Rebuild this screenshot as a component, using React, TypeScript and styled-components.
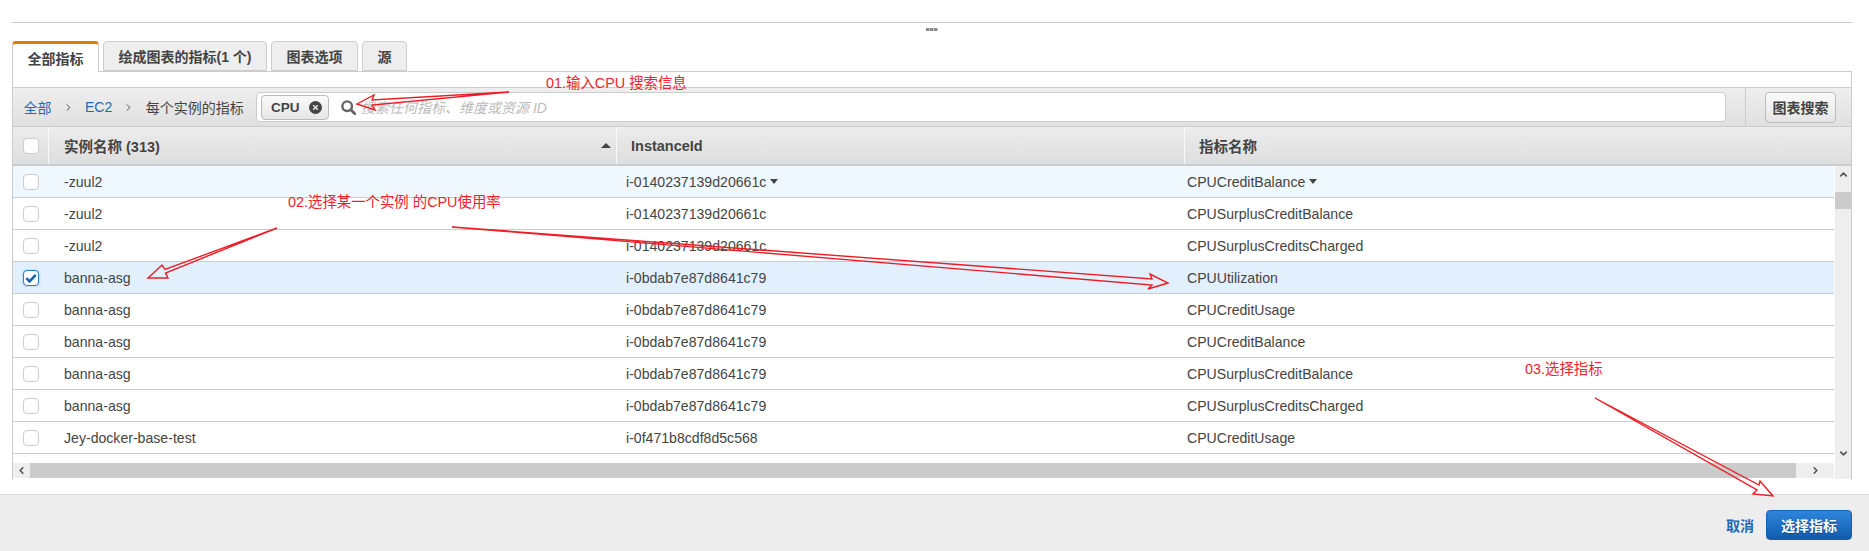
import { createGlobalStyle } from "styled-components";
import styled from "styled-components";
import { ChevronDown, ChevronLeft, ChevronRight, ChevronUp } from "lucide-react";

const FONT = `"Liberation Sans", "Noto Sans CJK SC", sans-serif`;

const GlobalStyle = createGlobalStyle`
  html, body {
    margin: 0;
    padding: 0;
    background: #fff;
    overflow: hidden;
  }
  body {
    font-family: ${FONT};
    color: #444;
  }
`;

const Page = styled.div`
  position: relative;
  width: 1869px;
  height: 551px;
  display: flex;
  flex-direction: column;
`;

const Splitter = styled.div`
  height: 41px;
  padding: 22px 17px 0 12px;
  box-sizing: border-box;
`;

const SplitLine = styled.div`
  height: 1px;
  background: #ccc;
`;

const SplitHandle = styled.div`
  width: 12px;
  height: 3px;
  margin: 5px auto 0;
  background: repeating-linear-gradient(90deg, #8a8a8a 0 3px, #c9c9c9 3px 4px);
`;

const TabBar = styled.div`
  display: flex;
  gap: 4px;
  height: 30px;
  margin: 0 17px 0 12px;
  position: relative;
  z-index: 1;
`;

const Tab = styled.div<{ $active?: boolean }>`
  box-sizing: border-box;
  padding: 0 14.5px;
  height: ${(p) => (p.$active ? "31px" : "30px")};
  display: flex;
  align-items: center;
  font-size: 14px;
  font-weight: 700;
  color: #444;
  background: ${(p) => (p.$active ? "#fff" : "#eee")};
  border: 1px solid #ccc;
  border-top: ${(p) => (p.$active ? "3px solid #e07b00" : "1px solid #ccc")};
  border-bottom: ${(p) => (p.$active ? "none" : "1px solid #ccc")};
  border-radius: 4px 4px 0 0;
`;

const Panel = styled.div`
  margin: 0 17px 0 12px;
  height: 409px;
  box-sizing: border-box;
  border: 1px solid #ccc;
  border-bottom: none;
  display: flex;
  flex-direction: column;
`;

const TabStrip = styled.div`
  height: 15px;
  flex: none;
  border-bottom: 1px solid #ccc;
`;

const Toolbar = styled.div`
  height: 38px;
  flex: none;
  display: flex;
  align-items: center;
  padding: 0 15px 0 10.5px;
  background: linear-gradient(#eee, #e0e0e0);
  border-bottom: 1px solid #ccc;
`;

const Crumbs = styled.div`
  display: flex;
  align-items: center;
  width: 232.5px;
  flex: none;
  font-size: 14px;
  color: #444;
`;

const CrumbLink = styled.a`
  color: #1f69b5;
`;

const CrumbSeparator = styled(ChevronRight)`
  width: 11px;
  height: 11px;
  margin: 0 11.5px 0 11px;
  color: #444;
`;

const SearchBox = styled.div`
  flex: 1;
  height: 30px;
  box-sizing: border-box;
  display: flex;
  align-items: center;
  padding-left: 4px;
  background: #fff;
  border: 1px solid #ccc;
  border-radius: 4px;
`;

const Chip = styled.div`
  width: 68px;
  height: 25px;
  box-sizing: border-box;
  display: flex;
  align-items: center;
  padding-left: 9px;
  gap: 9px;
  font-size: 13.5px;
  font-weight: 700;
  color: #444;
  background: linear-gradient(#fafafa, #e6e6e6);
  border: 1px solid #bbb;
  border-radius: 4px;
`;

const ChipClose = styled.svg`
  width: 13px;
  height: 13px;
`;

const SearchIcon = styled.svg`
  width: 15px;
  height: 15px;
  margin: 0 5px 0 12px;
  flex: none;
`;

const Placeholder = styled.span`
  font-size: 14px;
  font-style: italic;
  color: #bbb;
`;

const ToolDivider = styled.div`
  align-self: stretch;
  width: 1px;
  margin: 0 19px;
  background: #ccc;
`;

const GhostButton = styled.div`
  width: 71px;
  height: 31px;
  box-sizing: border-box;
  display: flex;
  align-items: center;
  justify-content: center;
  font-size: 14px;
  font-weight: 700;
  color: #444;
  background: linear-gradient(#fafafa, #e4e4e4);
  border: 1px solid #bbb;
  border-radius: 4px;
`;

const HeaderRow = styled.div`
  height: 39px;
  flex: none;
  box-sizing: border-box;
  display: grid;
  grid-template-columns: 35px 568px 568px 1fr;
  background: linear-gradient(#ececec, #dedede);
  border-bottom: 2px solid #ccc;
`;

const HeaderCell = styled.div<{ $pad?: number }>`
  display: flex;
  align-items: center;
  padding-left: ${(p) => p.$pad ?? 15}px;
  font-size: 14.5px;
  font-weight: 700;
  color: #444;
  border-left: 1px solid #f8f8f8;
  box-sizing: border-box;
`;

const CheckCell = styled.div`
  display: flex;
  align-items: center;
  justify-content: center;
`;

const SortCell = styled(HeaderCell)`
  justify-content: space-between;
  padding-right: 5px;
`;

const SortArrow = styled.span`
  width: 0;
  height: 0;
  border-left: 5px solid transparent;
  border-right: 5px solid transparent;
  border-bottom: 5px solid #444;
`;

const Checkbox = styled.div<{ $checked?: boolean }>`
  width: 16px;
  height: 16px;
  box-sizing: border-box;
  display: flex;
  align-items: center;
  justify-content: center;
  background: #fff;
  border-radius: 4px;
  border: 1px solid ${(p) => (p.$checked ? "#2b7bd0" : "#ccc")};
  box-shadow: ${(p) => (p.$checked ? "0 0 2px #7fb4ea" : "none")};
`;

const CheckMark = styled.svg`
  width: 12px;
  height: 10px;
`;

const Body = styled.div`
  flex: 1;
  display: grid;
  grid-template-columns: 1fr 17px;
  min-height: 0;
`;

const TableArea = styled.div`
  display: flex;
  flex-direction: column;
  min-width: 0;
`;

const Rows = styled.div`
  height: 297px;
  flex: none;
`;

const Row = styled.div<{ $tone?: "hover" | "selected" }>`
  height: 32px;
  box-sizing: border-box;
  display: grid;
  grid-template-columns: 35px 568px 568px 1fr;
  align-items: center;
  font-size: 14.1px;
  color: #444;
  border-bottom: 1px solid #ccc;
  background: ${(p) =>
    p.$tone === "hover" ? "#f0f8ff" : p.$tone === "selected" ? "#e2f0fd" : "#fff"};
`;

const Cell = styled.div<{ $pad: number }>`
  display: flex;
  align-items: center;
  gap: 4px;
  padding-left: ${(p) => p.$pad}px;
`;

const DropArrow = styled.span`
  width: 0;
  height: 0;
  border-left: 4.5px solid transparent;
  border-right: 4.5px solid transparent;
  border-top: 5px solid #444;
`;

const HScroll = styled.div`
  height: 15px;
  flex: none;
  display: flex;
  background: #eee;
`;

const ScrollButton = styled.div<{ $w: number }>`
  width: ${(p) => p.$w}px;
  flex: none;
  display: flex;
  align-items: center;
  justify-content: center;
  color: #555;
`;

const HThumb = styled.div`
  flex: 1;
  background: #cbcbcb;
`;

const VScroll = styled.div`
  display: flex;
  flex-direction: column;
  align-items: stretch;
  background: #eee;
  border-left: 1px solid #fff;
  height: 313px;
`;

const VThumb = styled.div`
  height: 17px;
  margin: 9px 0 0;
  background: #cbcbcb;
`;

const VSpacer = styled.div`
  flex: 1;
`;

const ArrowBox = styled.div<{ $end?: boolean }>`
  height: 17px;
  margin-bottom: ${(p) => (p.$end ? "17px" : "0")};
  display: flex;
  align-items: center;
  justify-content: center;
  color: #555;
`;

const Footer = styled.div`
  margin-top: 14px;
  flex: 1;
  display: flex;
  align-items: center;
  justify-content: flex-end;
  gap: 12px;
  padding: 4px 17px 0 0;
  background: #ededed;
  border-top: 1px solid #ddd;
`;

const CancelLink = styled.a`
  font-size: 14px;
  font-weight: 700;
  color: #2268b2;
`;

const PrimaryButton = styled.div`
  width: 86px;
  height: 30px;
  box-sizing: border-box;
  display: flex;
  align-items: center;
  justify-content: center;
  font-size: 14px;
  font-weight: 700;
  color: #fff;
  text-shadow: 0 1px 1px #0b4a8f;
  background: linear-gradient(#2f86dc, #0f5cae);
  border: 1px solid #1560ad;
  border-radius: 4px;
`;

// red notes drawn over the page, their place on the picture is the content
const Note = styled.div<{ $x: number; $y: number }>`
  position: absolute;
  left: ${(p) => p.$x}px;
  top: ${(p) => p.$y}px;
  font-size: 14.4px;
  line-height: 18px;
  color: #f0222e;
  white-space: nowrap;
`;

const ArrowLayer = styled.svg`
  position: absolute;
  left: 0;
  top: 0;
  width: 1869px;
  height: 551px;
  z-index: 2;
  pointer-events: none;
`;

const ARROWS = [
  "509,92 372,100 374,95 357,104 375,110 372,105",
  "277,228 165,269.5 162,265 148,278 168,278 165.5,273",
  "452,227 1152,279 1150,274 1168,283 1148,289 1152,285",
  "1595,398 1759,485 1760,481 1773,496 1753,494 1757,490",
];

const ROWS = [
  { name: "-zuul2", id: "i-0140237139d20661c", metric: "CPUCreditBalance", tone: "hover" as const, menu: true },
  { name: "-zuul2", id: "i-0140237139d20661c", metric: "CPUSurplusCreditBalance" },
  { name: "-zuul2", id: "i-0140237139d20661c", metric: "CPUSurplusCreditsCharged" },
  { name: "banna-asg", id: "i-0bdab7e87d8641c79", metric: "CPUUtilization", tone: "selected" as const, checked: true },
  { name: "banna-asg", id: "i-0bdab7e87d8641c79", metric: "CPUCreditUsage" },
  { name: "banna-asg", id: "i-0bdab7e87d8641c79", metric: "CPUCreditBalance" },
  { name: "banna-asg", id: "i-0bdab7e87d8641c79", metric: "CPUSurplusCreditBalance" },
  { name: "banna-asg", id: "i-0bdab7e87d8641c79", metric: "CPUSurplusCreditsCharged" },
  { name: "Jey-docker-base-test", id: "i-0f471b8cdf8d5c568", metric: "CPUCreditUsage" },
];

export default function App() {
  return (
    <Page>
      <GlobalStyle />
      <Splitter>
        <SplitLine />
        <SplitHandle />
      </Splitter>
      <TabBar>
        <Tab $active>全部指标</Tab>
        <Tab>绘成图表的指标(1 个)</Tab>
        <Tab>图表选项</Tab>
        <Tab>源</Tab>
      </TabBar>
      <Panel>
        <TabStrip />
        <Toolbar>
          <Crumbs>
            <CrumbLink>全部</CrumbLink>
            <CrumbSeparator strokeWidth={2} />
            <CrumbLink>EC2</CrumbLink>
            <CrumbSeparator strokeWidth={2} />
            <span>每个实例的指标</span>
          </Crumbs>
          <SearchBox>
            <Chip>
              CPU
              <ChipClose viewBox="0 0 13 13">
                <circle cx="6.5" cy="6.5" r="6.5" fill="#444" />
                <path d="M4.2 4.2l4.6 4.6M8.8 4.2l-4.6 4.6" stroke="#ddd" strokeWidth="1.6" />
              </ChipClose>
            </Chip>
            <SearchIcon viewBox="0 0 15 15">
              <circle cx="6.2" cy="6.2" r="4.8" fill="none" stroke="#666" strokeWidth="2.4" />
              <path d="M9.8 9.8l4 4" stroke="#666" strokeWidth="2.8" strokeLinecap="round" />
            </SearchIcon>
            <Placeholder>搜索任何指标、维度或资源 ID</Placeholder>
          </SearchBox>
          <ToolDivider />
          <GhostButton>图表搜索</GhostButton>
        </Toolbar>
        <HeaderRow>
          <CheckCell>
            <Checkbox />
          </CheckCell>
          <SortCell>
            实例名称 (313)
            <SortArrow />
          </SortCell>
          <HeaderCell $pad={14}>InstanceId</HeaderCell>
          <HeaderCell $pad={14}>指标名称</HeaderCell>
        </HeaderRow>
        <Body>
          <TableArea>
            <Rows>
              {ROWS.map((row, index) => (
                <Row key={index} $tone={row.tone}>
                  <CheckCell>
                    <Checkbox $checked={row.checked}>
                      {row.checked && (
                        <CheckMark viewBox="0 0 11 9">
                          <path d="M1.2 4.6l3 3 5.6-6" fill="none" stroke="#1a5fb0" strokeWidth="2.4" />
                        </CheckMark>
                      )}
                    </Checkbox>
                  </CheckCell>
                  <Cell $pad={16}>{row.name}</Cell>
                  <Cell $pad={10}>
                    {row.id}
                    {row.menu && <DropArrow />}
                  </Cell>
                  <Cell $pad={3}>
                    {row.metric}
                    {row.menu && <DropArrow />}
                  </Cell>
                </Row>
              ))}
            </Rows>
            <HScroll>
              <ScrollButton $w={17}>
                <ChevronLeft size={11} strokeWidth={3.5} />
              </ScrollButton>
              <HThumb />
              <ScrollButton $w={38}>
                <ChevronRight size={11} strokeWidth={3.5} />
              </ScrollButton>
            </HScroll>
          </TableArea>
          <VScroll>
            <ArrowBox>
              <ChevronUp size={11} strokeWidth={3.5} />
            </ArrowBox>
            <VThumb />
            <VSpacer />
            <ArrowBox $end>
              <ChevronDown size={11} strokeWidth={3.5} />
            </ArrowBox>
          </VScroll>
        </Body>
      </Panel>
      <Footer>
        <CancelLink>取消</CancelLink>
        <PrimaryButton>选择指标</PrimaryButton>
      </Footer>
      <Note $x={546} $y={74}>01.输入CPU 搜索信息</Note>
      <Note $x={288} $y={193}>02.选择某一个实例 的CPU使用率</Note>
      <Note $x={1525} $y={360}>03.选择指标</Note>
      <ArrowLayer viewBox="0 0 1869 551">
        {ARROWS.map((points) => (
          <polygon key={points} points={points} fill="none" stroke="#ee1c25" strokeWidth="1.4" />
        ))}
      </ArrowLayer>
    </Page>
  );
}
